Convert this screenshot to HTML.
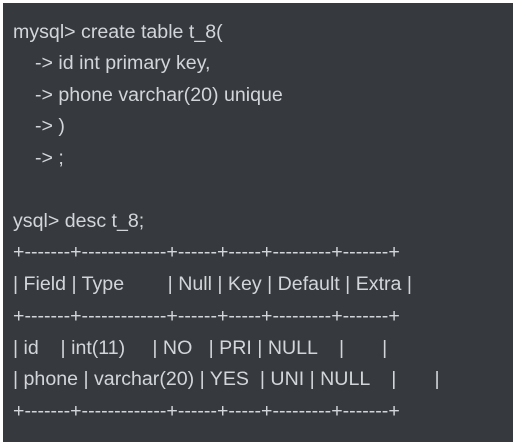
<!DOCTYPE html>
<html><head><meta charset="utf-8"><style>
html,body{margin:0;padding:0;background:#fff;width:515px;height:445px;overflow:hidden}
#box{position:absolute;left:3px;top:3px;width:510px;height:439px;background:#36393d}
.l{position:absolute;left:13px;white-space:pre;font-family:"Liberation Sans",Arial,sans-serif;font-size:19.6px;color:#d2d6da;line-height:20px}
.i{left:35px}
</style></head><body><div id="box"></div>
<div class="l" style="top:22px">mysql&gt; create table t_8(</div>
<div class="l i" style="top:53px">-&gt; id int primary key,</div>
<div class="l i" style="top:85px">-&gt; phone varchar(20) unique</div>
<div class="l i" style="top:116px">-&gt; )</div>
<div class="l i" style="top:148px">-&gt; ;</div>
<div class="l" style="top:211px">ysql&gt; desc t_8;</div>
<div class="l" style="top:242px">+-------+-------------+------+-----+---------+-------+</div>
<div class="l" style="top:274px">| Field | Type        | Null | Key | Default | Extra |</div>
<div class="l" style="top:306px">+-------+-------------+------+-----+---------+-------+</div>
<div class="l" style="top:338px">| id    | int(11)     | NO   | PRI | NULL    |       |</div>
<div class="l" style="top:369px">| phone | varchar(20) | YES  | UNI | NULL    |       |</div>
<div class="l" style="top:401px">+-------+-------------+------+-----+---------+-------+</div>
</body></html>
